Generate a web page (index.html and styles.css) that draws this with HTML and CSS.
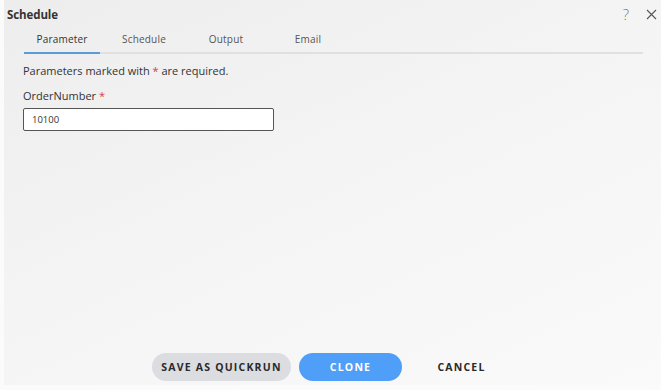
FILE: index.html
```html
<!DOCTYPE html>
<html lang="en">
<head>
  <meta charset="UTF-8">
  <title>Schedule</title>
  <link rel="stylesheet" href="styles.css">
</head>
<body>
  <div class="dialog">
    <div class="header">
      <h1 class="title">Schedule</h1>
      <div class="header-icons">
        <span class="icon-help">?</span>
        <svg class="icon-close" width="11" height="11" viewBox="0 0 11 11">
          <path d="M1 1 L10 10 M10 1 L1 10" stroke="#555" stroke-width="1.1" fill="none"/>
        </svg>
      </div>
    </div>

    <div class="tabs">
      <div class="tab active">Parameter</div>
      <div class="tab">Schedule</div>
      <div class="tab">Output</div>
      <div class="tab">Email</div>
    </div>

    <div class="content">
      <p class="note">Parameters marked with <span class="req">*</span> are required.</p>
      <label class="field-label" for="orderNumber">OrderNumber <span class="req">*</span></label>
      <input class="field-input" type="text" id="orderNumber" value="10100">
    </div>

    <div class="actions">
      <button class="btn btn-grey">SAVE AS QUICKRUN</button>
      <button class="btn btn-blue">CLONE</button>
      <button class="btn btn-text">CANCEL</button>
    </div>
  </div>
</body>
</html>
```

FILE: styles.css
```css
/* ===== Reset ===== */
* {
  margin: 0;
  padding: 0;
  box-sizing: border-box;
}

html, body {
  width: 661px;
  height: 390px;
  overflow: hidden;
}

body {
  font-family: "Open Sans", "Noto Sans", Arial, sans-serif;
  color: #333;
  background: #fbfbfb;
  padding-left: 4px;
}

.dialog {
  height: 385px;
  display: flex;
  flex-direction: column;
  background: linear-gradient(155deg, #ededed 0%, #f4f4f4 45%, #fbfafa 100%);
}

.header {
  display: flex;
  justify-content: space-between;
  align-items: center;
  height: 28px;
  padding: 0 4px 0 3px;
}

.title {
  font-size: 11.5px;
  font-weight: 700;
  color: #333;
  letter-spacing: -0.1px;
}

.header-icons {
  display: flex;
  align-items: center;
  gap: 17px;
  color: #666;
}

.icon-help {
  font-size: 15px;
  font-weight: 300;
  color: #777;
  line-height: 1;
}

.icon-close {
  display: block;
}

.tabs {
  display: flex;
  gap: 6px;
  margin: 0 18px 0 20px;
  border-bottom: 2px solid #e0e0e0;
}

.tab {
  width: 76px;
  text-align: center;
  font-size: 10px;
  color: #555;
  padding: 4px 0 6px;
  letter-spacing: 0.2px;
  margin-bottom: -2px;
  border-bottom: 2px solid transparent;
}

.tab.active {
  color: #333;
  border-bottom-color: #5b9bd8;
}

.content {
  flex: 1;
  padding: 9px 19px 0;
}

.note {
  font-size: 11px;
  color: #333;
  margin-bottom: 10px;
}

.req {
  color: #e03a3a;
}

.field-label {
  display: block;
  font-size: 11px;
  color: #333;
  margin-bottom: 3px;
}

.field-input {
  width: 251px;
  height: 23px;
  padding: 0 8px;
  border: 1px solid #555;
  border-radius: 2px;
  background: white;
  font-family: inherit;
  font-size: 9.5px;
  color: #333;
  outline: none;
}

.actions {
  display: flex;
  justify-content: center;
  gap: 8px;
  padding-bottom: 4px;
}

.btn {
  height: 28px;
  border: none;
  border-radius: 14px;
  font-family: inherit;
  font-size: 10.5px;
  font-weight: 700;
  letter-spacing: 1.2px;
  cursor: pointer;
}

.btn-grey {
  width: 139px;
  background: #dcdde0;
  color: #2a2a2a;
}

.btn-blue {
  width: 103px;
  background: #4f9ef8;
  color: white;
}

.btn-text {
  width: 103px;
  background: transparent;
  color: #2a2a2a;
}
```
